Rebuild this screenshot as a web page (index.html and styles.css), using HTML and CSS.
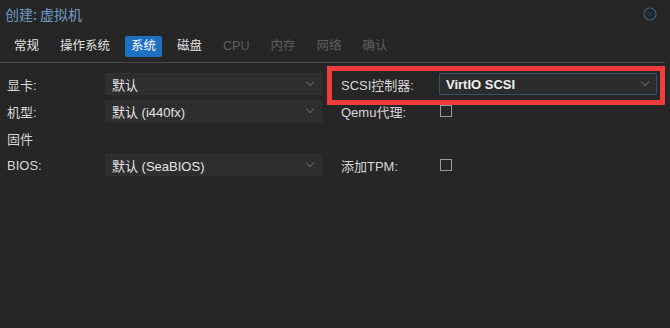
FILE: index.html
```html
<!DOCTYPE html>
<html lang="zh">
<head>
<meta charset="utf-8">
<title>创建: 虚拟机</title>
<link rel="stylesheet" href="styles.css">
</head>
<body>
<div class="window">
  <header class="titlebar">
    <span class="title">创建: 虚拟机</span>
    <svg class="close" width="14" height="14" viewBox="0 0 14 14">
      <circle cx="7" cy="7" r="6" fill="none" stroke="#355d80" stroke-width="1.2"/>
      <path d="M5.4 5.4 L8.6 8.6 M8.6 5.4 L5.4 8.6" stroke="#2a465e" stroke-width="1"/>
    </svg>
  </header>
  <nav class="tabs">
    <span class="tab">常规</span>
    <span class="tab">操作系统</span>
    <span class="tab active">系统</span>
    <span class="tab">磁盘</span>
    <span class="tab disabled">CPU</span>
    <span class="tab disabled">内存</span>
    <span class="tab disabled">网络</span>
    <span class="tab disabled">确认</span>
  </nav>
  <main class="form">
    <div class="field"><label class="lbl">显卡:</label><div class="select"><span>默认</span><i class="chev"></i></div></div>
    <div class="field highlight"><label class="lbl">SCSI控制器:</label><div class="select focus"><span>VirtIO SCSI</span><i class="chev"></i></div></div>
    <div class="field"><label class="lbl">机型:</label><div class="select"><span>默认 (i440fx)</span><i class="chev"></i></div></div>
    <div class="field"><label class="lbl">Qemu代理:</label><span class="check"></span></div>
    <div class="field"><label class="lbl">固件</label></div>
    <div class="field"></div>
    <div class="field"><label class="lbl">BIOS:</label><div class="select"><span>默认 (SeaBIOS)</span><i class="chev"></i></div></div>
    <div class="field"><label class="lbl">添加TPM:</label><span class="check"></span></div>
  </main>
</div>
</body>
</html>
```

FILE: styles.css
```css
html, body {
  margin: 0;
  padding: 0;
  background: #262626;
}
body {
  width: 670px;
  height: 328px;
  overflow: hidden;
  font-family: "Liberation Sans", "Noto Sans CJK SC", sans-serif;
  color: #d9d9d9;
  font-size: 13px;
}
.titlebar {
  height: 28px;
  display: flex;
  align-items: center;
  justify-content: space-between;
  padding: 0 13px 0 5px;
}
.title {
  color: #6f9bc6;
  font-size: 14px;
  font-family: "Noto Sans CJK SC", "Liberation Sans", sans-serif;
}
.close {
  display: block;
}
.tabs {
  display: flex;
  align-items: center;
  gap: 9px;
  padding: 8px 0 5px 8px;
  border-bottom: 1px solid #484848;
  margin: 0 5px 0 0;
}
.tab {
  font-size: 12.5px;
  line-height: 21px;
  height: 21px;
  padding: 0 6px;
  color: #e2e2e2;
  border-radius: 2px;
}
.tab.active {
  background: #1e70c0;
  color: #ffffff;
}
.tab.disabled {
  color: #5f5f5f;
}
.form {
  display: grid;
  grid-template-columns: 315px 316px;
  grid-auto-rows: 22px;
  column-gap: 19px;
  row-gap: 5px;
  padding: 10px 0 0 7px;
}
.field {
  display: flex;
  align-items: center;
  position: relative;
}
.lbl {
  width: 98px;
  flex: none;
  color: #d6d6d6;
}
.select {
  flex: 1;
  height: 22px;
  box-sizing: border-box;
  background: #2e2e2e;
  border: 1px solid #313131;
  display: flex;
  align-items: center;
  justify-content: space-between;
  padding: 0 8px 0 6px;
  color: #e4e4e4;
}
.select.focus {
  border-color: #34516c;
  background: #2c2c2c;
  font-weight: bold;
  color: #f0f0f0;
}
.chev {
  width: 5px;
  height: 5px;
  border-right: 1px solid #666;
  border-bottom: 1px solid #666;
  transform: rotate(45deg);
  margin-top: -4px;
}
.check {
  width: 12px;
  height: 12px;
  box-sizing: border-box;
  border: 1.5px solid #9a9a9a;
  margin-left: 1px;
}
.highlight::after {
  content: "";
  position: absolute;
  top: -7px;
  bottom: -10px;
  left: -14px;
  right: -8px;
  border: 5px solid #f23b3b;
  pointer-events: none;
}
```
